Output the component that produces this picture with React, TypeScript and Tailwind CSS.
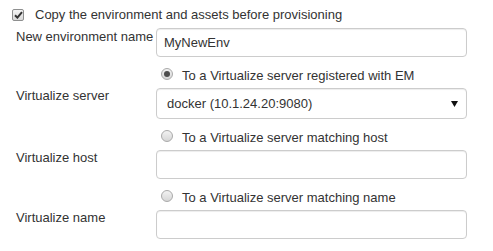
import { useState } from "react";

function Checkbox({ checked }: { checked: boolean }) {
  return (
    <span className="w-[12px] h-[12px] flex items-center justify-center rounded-[2px] border border-[#8e8f8f] bg-gradient-to-b from-[#f4f4f4] to-[#d8d8d8] shrink-0">
      {checked && (
        <svg width="9" height="8" viewBox="0 0 9 8">
          <path d="M1 4.2 L3.4 6.6 L8 1.2" fill="none" stroke="#333" strokeWidth="2" />
        </svg>
      )}
    </span>
  );
}

function Radio({ checked, onClick }: { checked: boolean; onClick: () => void }) {
  return (
    <span
      onClick={onClick}
      className="w-[12px] h-[12px] mt-[2px] flex items-center justify-center rounded-full border border-[#a9a9a9] bg-gradient-to-b from-[#f2f2f2] to-[#d6d6d6] shrink-0 cursor-pointer"
    >
      {checked && <span className="w-[6px] h-[6px] rounded-full bg-[#4d4d4d]" />}
    </span>
  );
}

const fieldCls =
  "block w-[311px] border border-[#cccccc] rounded-[4px] bg-white text-[13px] text-[#333] outline-none shadow-[inset_0_1px_1px_rgba(0,0,0,0.075)]";

function RadioRow({
  label,
  checked,
  onClick,
}: {
  label: string;
  checked: boolean;
  onClick: () => void;
}) {
  return (
    <div className="flex items-start h-[31px] pl-[161px] pt-[9px] leading-5">
      <Radio checked={checked} onClick={onClick} />
      <span className="ml-[9px] whitespace-nowrap">{label}</span>
    </div>
  );
}

export default function App() {
  const [mode, setMode] = useState("em");

  return (
    <div
      className="w-[493px] h-[251px] bg-white text-[13px] text-[#333] flex flex-col"
      style={{ fontFamily: '"Liberation Sans", Arial, sans-serif' }}
    >
      {/* Copy checkbox */}
      <div className="flex items-start pt-[5px] pl-[12px] h-[28px] leading-5">
        <span className="mt-[4px]">
          <Checkbox checked />
        </span>
        <span className="ml-[11px] whitespace-nowrap">
          Copy the environment and assets before provisioning
        </span>
      </div>

      {/* New environment name */}
      <div className="flex h-[29px]">
        <label className="w-[156px] pl-[16px] leading-4 pt-[1px] whitespace-nowrap">
          New environment name
        </label>
        <input className={fieldCls + " h-[29px] pl-[7px]"} defaultValue="MyNewEnv" />
      </div>

      <RadioRow
        label="To a Virtualize server registered with EM"
        checked={mode === "em"}
        onClick={() => setMode("em")}
      />
      <div className="flex h-[31px]">
        <label className="w-[156px] pl-[16px] leading-4 whitespace-nowrap">Virtualize server</label>
        <div className="relative h-[31px]">
          <select className={fieldCls + " h-[31px] pl-[10px] appearance-none"} defaultValue="docker">
            <option value="docker">docker (10.1.24.20:9080)</option>
          </select>
          <svg
            className="absolute right-[9px] top-[13px] pointer-events-none"
            width="7"
            height="6"
            viewBox="0 0 7 6"
          >
            <path d="M0 0 H7 L3.5 6 Z" fill="#111" />
          </svg>
        </div>
      </div>

      <RadioRow
        label="To a Virtualize server matching host"
        checked={mode === "host"}
        onClick={() => setMode("host")}
      />
      <div className="flex h-[29px]">
        <label className="w-[156px] pl-[16px] leading-4 whitespace-nowrap">Virtualize host</label>
        <input className={fieldCls + " h-[29px] pl-[7px]"} />
      </div>

      <RadioRow
        label="To a Virtualize server matching name"
        checked={mode === "name"}
        onClick={() => setMode("name")}
      />
      <div className="flex h-[29px]">
        <label className="w-[156px] pl-[16px] leading-4 whitespace-nowrap">Virtualize name</label>
        <input className={fieldCls + " h-[29px] pl-[7px]"} />
      </div>
    </div>
  );
}
